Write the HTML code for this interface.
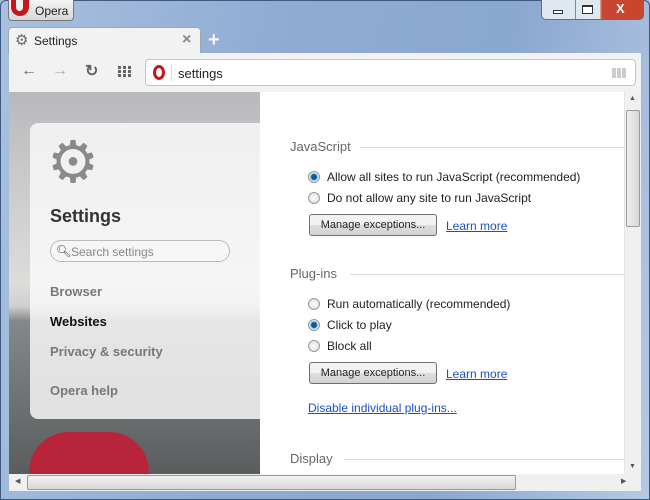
<!DOCTYPE html>
<html><head><style>
*{margin:0;padding:0;box-sizing:border-box}
body{width:650px;height:500px;overflow:hidden;font-family:"Liberation Sans",sans-serif;font-size:12px;position:relative;background:linear-gradient(100deg,#a9c0de 0%,#8fabd3 40%,#8aa7d0 70%,#b5c9e3 100%)}
.abs{position:absolute}
.frame{left:0;top:0;width:650px;height:500px;border:1px solid #3f5a80;border-radius:6px 6px 0 0}
.opbtn{left:8px;top:0;width:66px;height:21px;background:linear-gradient(#f4f4f4,#d8d8d8);border:1px solid #777;border-top:none;border-radius:0 0 4px 4px;font-size:12px;color:#222}
.tab{left:8px;top:27px;width:193px;height:27px;background:#f2f2f2;border-radius:4px 4px 0 0;border:1px solid #9aa8bb;border-bottom:none}
.toolbar{left:9px;top:53px;width:632px;height:39px;background:#f2f2f2}
.addr{left:145px;top:59px;width:491px;height:27px;background:#fff;border:1px solid #c4c4c4;border-radius:4px}
.left{left:9px;top:92px;width:251px;height:382px;overflow:hidden;background:linear-gradient(#b9b9bd 0%,#c8c8ca 20%,#dedcda 50%,#d0d0d0 56%,#85888a 60%,#5a5d5e 100%)}
.card{left:21px;top:31px;width:240px;height:296px;background:rgba(250,250,250,.82);border-radius:8px 0 0 8px}
.right{left:260px;top:92px;width:364px;height:382px;background:#fff}
.vs{left:624px;top:92px;width:17px;height:382px;background:#f0f0f0;border-left:1px solid #e4e4e4}
.hs{left:9px;top:474px;width:632px;height:17px;background:#f0f0f0}
h3{position:absolute;font-weight:normal;font-size:13px;color:#666}
.line{position:absolute;height:1px;background:#ddd}
.r{position:absolute;width:12px;height:12px;border-radius:50%;border:1px solid #9a9a9a;background:radial-gradient(#fafafa,#dcdcdc)}
.r.on{background:radial-gradient(#0b5d93 0 2.5px,#3e9ad1 3px,#d6e8f4 4px,#e8e8e8 6px)}
.t{position:absolute;font-size:12px;color:#222}
.btn{position:absolute;width:128px;height:22px;border:1px solid #707070;border-radius:3px;background:linear-gradient(#f2f2f2 50%,#dedede 50%,#d2d2d2);font-size:11px;text-align:center;line-height:20px;color:#222}
.lk{position:absolute;color:#1a4fc4;text-decoration:underline;font-size:12px}
.nav{position:absolute;left:50px;font-weight:bold;font-size:13px;color:#777}
</style></head><body>
<div class="abs frame"></div>
<div class="abs opbtn"><span class="abs" style="left:2px;top:-1px;width:18px;height:17px;background:#c4161c;border-radius:0 0 9px 9px"></span><span class="abs" style="left:7px;top:-1px;width:7px;height:12px;background:#f0f0f0;border-radius:0 0 4px 4px"></span><span class="abs" style="left:26px;top:4px">Opera</span></div>
<div class="abs" style="left:541px;top:0;width:103px;height:20px;border:1px solid #5a6f8e;border-top:none;border-radius:0 0 5px 5px;background:linear-gradient(90deg,#dfe7f1 0 58%,#c8462f 58%);overflow:hidden">
<span class="abs" style="left:33px;top:0;width:1px;height:20px;background:#7a8aa0"></span>
<span class="abs" style="left:59px;top:0;width:1px;height:20px;background:#7a8aa0"></span>
<span class="abs" style="left:11px;top:10px;width:10px;height:4px;border:1px solid #333;background:#fff"></span>
<span class="abs" style="left:40px;top:5px;width:11px;height:9px;border:1px solid #333;border-top-width:2px;background:#fff"></span>
<span class="abs" style="left:74px;top:1px;color:#fff;font-weight:bold;font-size:13px">X</span></div>
<div class="abs tab"><span class="abs" style="left:6px;top:3px;font-size:15px;color:#666">⚙</span><span class="abs" style="left:25px;top:6px;color:#222">Settings</span><span class="abs" style="left:173px;top:3px;color:#888;font-size:16px;font-weight:bold">×</span></div>
<span class="abs" style="left:208px;top:29px;color:#f4f8fc;font-size:20px;font-weight:bold">+</span>
<div class="abs toolbar"></div>
<span class="abs" style="left:21px;top:62px;color:#666;font-size:16px;font-weight:bold">←</span>
<span class="abs" style="left:52px;top:62px;color:#aaa;font-size:16px;font-weight:bold">→</span>
<span class="abs" style="left:85px;top:61px;color:#666;font-size:16px;font-weight:bold">↻</span>
<span class="abs" style="left:118px;top:66px;width:13px;height:11px;background:repeating-linear-gradient(90deg,#666 0 3px,transparent 3px 5px);-webkit-mask:repeating-linear-gradient(#000 0 3px,transparent 3px 4px)"></span>
<div class="abs addr"><span class="abs" style="left:7px;top:5px;width:12px;height:15px;border:3px solid #c4161c;border-radius:50%"></span><span class="abs" style="left:25px;top:4px;width:1px;height:17px;background:#ddd"></span><span class="abs" style="left:32px;top:6px;font-size:13px;color:#222">settings</span><span class="abs" style="left:466px;top:8px;width:14px;height:10px;background:repeating-linear-gradient(90deg,#ccc 0 4px,transparent 4px 5px)"></span></div>
<div class="abs left">
<div class="abs" style="left:20px;top:340px;width:120px;height:50px;background:#b8243a;border-radius:40px 40px 0 0"></div>
<div class="abs card">
<span class="abs" style="left:17px;top:10px;font-size:58px;color:#8a8a8a;line-height:60px">⚙</span>
<span class="abs" style="left:20px;top:83px;font-size:18px;font-weight:bold;color:#333">Settings</span>
<div class="abs" style="left:20px;top:117px;width:180px;height:22px;border:1px solid #bbb;border-radius:11px;background:#f6f6f6"><span class="abs" style="left:5px;top:3px;font-size:12px;color:#444">🔍︎</span><span class="abs" style="left:20px;top:4px;color:#888;font-size:12px">Search settings</span></div>
</div></div>
<div class="nav" style="top:284px">Browser</div>
<div class="nav" style="top:314px;color:#111">Websites</div>
<div class="nav" style="top:344px">Privacy &amp; security</div>
<div class="nav" style="top:383px">Opera help</div>
<div class="abs right"></div>
<span class="abs" style="left:252px;top:313px;width:0;height:0;border:8px solid transparent;border-right-color:#fff"></span>
<h3 style="left:290px;top:139px">JavaScript</h3><div class="line" style="left:360px;top:147px;width:264px"></div>
<div class="r on" style="left:308px;top:171px"></div><div class="t" style="left:327px;top:170px">Allow all sites to run JavaScript (recommended)</div>
<div class="r" style="left:308px;top:192px"></div><div class="t" style="left:327px;top:191px">Do not allow any site to run JavaScript</div>
<div class="btn" style="left:309px;top:214px">Manage exceptions...</div><div class="lk" style="left:446px;top:219px">Learn more</div>
<h3 style="left:290px;top:266px">Plug-ins</h3><div class="line" style="left:350px;top:274px;width:274px"></div>
<div class="r" style="left:308px;top:298px"></div><div class="t" style="left:327px;top:297px">Run automatically (recommended)</div>
<div class="r on" style="left:308px;top:319px"></div><div class="t" style="left:327px;top:318px">Click to play</div>
<div class="r" style="left:308px;top:340px"></div><div class="t" style="left:327px;top:339px">Block all</div>
<div class="btn" style="left:309px;top:362px">Manage exceptions...</div><div class="lk" style="left:446px;top:367px">Learn more</div>
<div class="lk" style="left:308px;top:401px">Disable individual plug-ins...</div>
<h3 style="left:290px;top:451px">Display</h3><div class="line" style="left:344px;top:459px;width:280px"></div>
<div class="abs vs"><span class="abs" style="left:4px;top:3px;font-size:7px;color:#555">▲</span><div class="abs" style="left:1px;top:18px;width:14px;height:117px;border:1px solid #9a9a9a;border-radius:2px;background:linear-gradient(90deg,#eee,#d8d8d8)"></div><span class="abs" style="left:4px;top:371px;font-size:7px;color:#555">▼</span></div>
<div class="abs hs"><span class="abs" style="left:6px;top:3px;font-size:7px;color:#555">◀</span><div class="abs" style="left:18px;top:1px;width:489px;height:15px;border:1px solid #9a9a9a;border-radius:2px;background:linear-gradient(#f2f2f2,#d8d8d8)"></div><span class="abs" style="left:612px;top:3px;font-size:7px;color:#555">▶</span></div>
</body></html>
